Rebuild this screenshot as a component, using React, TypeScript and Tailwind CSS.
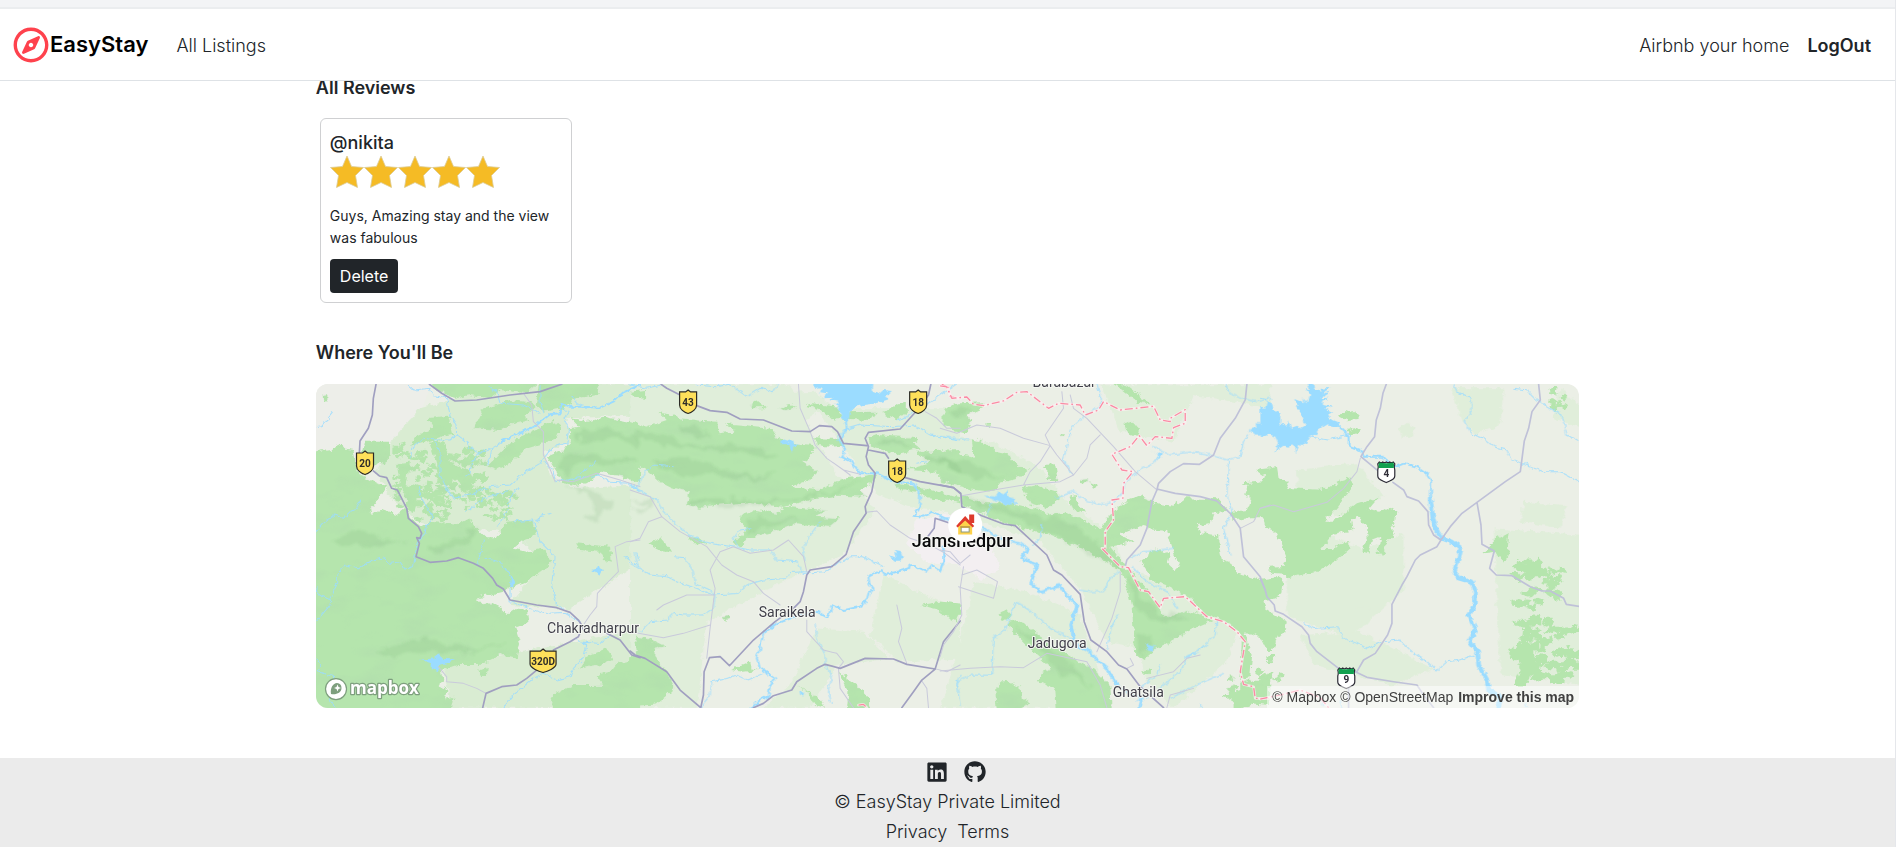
import type { ReactNode } from "react";
import { FaGithub, FaLinkedin, FaRegCompass } from "react-icons/fa";

const FOREST = "#b5e5ad";
const PALE = "#e0eeda";
const WATER = "#9bdcff";

/** Deterministic small patches of woodland scattered inside a box. */
function scatter(seed: number, x: number, y: number, w: number, h: number, count: number, size: number) {
  let s = seed * 7919;
  const rnd = () => {
    s = (s * 16807) % 2147483647;
    return s / 2147483647;
  };
  rnd();
  let d = "";
  for (let i = 0; i < count; i++) {
    const cx = x + rnd() * w;
    const cy = y + rnd() * h;
    const n = 7;
    for (let k = 0; k < n; k++) {
      const a = (k / n) * Math.PI * 2;
      const r = size * (0.35 + rnd() * 0.9);
      const px = Math.round(cx + Math.cos(a) * r * 1.3);
      const py = Math.round(cy + Math.sin(a) * r * 0.8);
      d += `${k ? "L" : "M"}${px} ${py}`;
    }
    d += "Z";
  }
  return d;
}

const tiles = [
  {
    x: -6,
    pale: [
      "M330 100L480 60 760 100 780 200 700 230 720 300 790 340 990 330 990 560 900 620 780 700 600 690 700 560 640 500 560 470 330 440 250 380 200 290 250 190Z",
      "M400 870L520 850 640 830 800 800 990 760 990 998 420 998Z",
      "M360 28L990 28 990 120 780 130 500 110Z",
    ],
    paleTone: "#d9ecd2",
    forest: [
      "M0 235L60 225 95 208 110 222 130 225 140 270 150 300 165 305 200 325 232 335 210 365 180 405 185 420 215 405 260 420 290 395 300 430 330 455 360 440 400 445 440 450 480 430 500 460 530 490 560 490 590 440 640 435 670 440 680 480 640 495 610 520 650 530 700 520 728 560 690 590 650 620 600 640 580 650 540 660 500 668 520 690 545 684 570 700 590 720 620 700 650 705 655 740 615 755 630 800 620 850 570 840 510 870 440 870 395 885 400 910 385 930 410 940 405 970 430 965 420 1020 0 1020Z",
      "M165 200L240 200 240 235 225 270 200 265 180 290 150 260 160 225Z",
      "M250 215L285 205 275 235 250 240Z",
      "M365 20L690 20 650 55 570 45 540 70 480 60 430 68 380 45Z",
      "M490 160L520 100 600 75 660 82 680 95 640 120 660 135 600 150 570 165Z",
      "M620 190L690 160 730 135 755 155 740 190 700 205 650 220 600 265 555 285 530 275 590 215Z",
      "M350 130L415 122 430 180 400 185 340 205 300 212 325 180 370 160Z",
      "M690 20L870 20 860 60 800 70 760 100 700 110 680 90Z",
      "M785 130L830 140 880 128 940 140 990 150 990 325 940 305 870 290 830 325 790 330 760 325 740 290 710 245 760 225 780 200 775 160 810 155Z",
      "M798 505L850 510 900 515 905 560 882 555 870 530 810 525Z",
      "M990 850L920 865 900 890 860 900 880 930 790 930 720 965 740 1015 990 1015Z",
      "M830 845L890 820 910 850 870 870 810 880Z",
      "M505 885L530 875 528 900 512 900Z",
      "M38 60L52 58 52 78 40 74Z",
      "M260 265L300 260 290 330 330 350 310 420 300 380 270 330Z",
      "M360 200L400 195 420 260 480 290 500 320 470 330 430 310 420 340 390 320 380 260Z",
      scatter(11, 255, 230, 260, 170, 90, 11),
      scatter(29, 300, 340, 130, 100, 36, 12),
      scatter(5, 470, 340, 150, 90, 34, 11),
      scatter(71, 390, 220, 130, 130, 24, 13),
    ],
    shade: [
      "M60 500Q130 450 210 480T300 500Q200 500 150 520Z",
      "M350 520Q430 480 500 470 470 500 380 530Z",
      "M200 830Q320 780 410 810T600 790Q520 840 400 830T260 850Z",
      "M800 170Q880 150 990 190L990 215Q900 180 820 210Z",
      "M740 260Q820 220 900 240T990 260Q900 270 840 260T770 310Z",
      "M770 335Q850 350 910 380 930 400 860 430 790 430 850 415 880 390 820 360 770 345Z",
      "M600 500Q640 460 700 480 750 470 745 410 760 440 755 490 700 500 640 490Z",
      "M400 690Q470 700 520 740 560 760 600 750 520 780 460 730Z",
      "M860 940Q910 900 990 900 930 930 900 970Z",
    ],
    water: [
      "M330 853L370 850 385 838 400 852 440 853 405 865 390 870 380 888 365 882 365 865Z",
      "M603 598L615 620 612 640 600 630Z",
      "M846 585L862 580 865 568 870 580 882 582 872 592 868 602 858 592Z",
    ],
    creeks: [
      "M18 470L40 445 75 420 100 430 120 410 140 400 152 378",
      "M18 740L60 690 62 675 40 665 25 655 18 640M60 670L80 630 80 600 105 570 145 578 190 555 225 548 240 565 270 560 285 582 310 575 322 500 345 475 350 450 370 430 350 395 335 370 325 335",
      "M18 850L30 870 25 890 70 905 75 940 60 975 75 998",
      "M295 30L312 45 360 40 370 62 410 68 420 120 438 150 440 180 420 195 375 195 340 190 305 220 302 252",
      "M375 198L390 230 390 300 410 340 430 370 480 360 540 335 600 330 640 295 690 265 705 245 730 215 770 205 775 160 762 130 775 110 745 95",
      "M445 182L475 205 478 218 510 235 545 220 580 200",
      "M510 232L485 260 480 295 468 305M545 222L540 250 528 270",
      "M625 335L600 370 590 410 560 455M520 495L510 540 500 570M470 410L520 370 600 345",
      "M615 440L670 435 690 500 735 545 725 630 740 690 760 700",
      "M525 550L570 560 590 590 605 600M600 640L600 680 700 715 760 712 810 740",
      "M705 260L730 290 735 320 800 310 870 300 900 322 960 325 990 350M790 315L830 280 855 260M720 415L690 425 680 440",
      "M800 795L830 810 820 850 790 880 780 905 740 915 700 895 670 910 610 960 580 998M808 800L870 805 900 780",
      "M540 35L560 50 570 85 640 90 690 115M690 30L690 80 700 110M785 65L800 85 830 100",
      "M18 155L35 152 68 110",
      "M980 530L985 555M945 545L965 560 985 575",
    ],
    rivers: ["M575 198L610 182 650 165 680 150 720 118 752 115 755 85 775 95 820 95 870 98 910 80 940 52 990 30"],
    minor: [
      "M385 875L410 905 410 920 460 925 500 940 528 955",
      "M640 55L665 90 670 140 700 170 700 240 715 270 735 320",
      "M740 315L790 320 860 295 930 315 990 335",
      "M990 495L950 500 915 515 925 590 885 630 862 655 860 695 840 720 820 750",
    ],
    major: [
      "M198 28L190 70 187 120 175 160 150 198 148 235",
      "M190 288L208 303 230 308 245 340 262 345 290 400 295 430 325 455 335 475 330 490 320 488 328 505 318 545 360 562 410 558 445 548 490 565 520 580 548 610 560 630 580 642 600 675 680 690 740 698 780 712 805 735 818 755 805 785 780 800 730 825",
      "M680 885L650 910 620 930 575 935 528 955 518 998",
      "M358 28L395 55 435 78 500 75 600 60 690 50 755 28",
      "M890 775L930 795 965 840 990 848",
    ],
    border: [],
  },
  {
    x: 314,
    pale: [
      "M0 28L480 28 540 160 620 300 740 400 640 540 520 590 400 650 230 740 200 998 0 998Z",
      "M760 600L840 640 990 700 990 850 800 860 720 780Z",
      "M560 760L700 770 780 850 620 870 540 998 400 998 480 930Z",
      "M560 100L990 100 990 420 860 400 740 360Z",
      "M340 60L560 50 600 90 480 160 350 130Z",
    ],
    paleTone: PALE,
    forest: [
      "M0 140L50 155 110 135 85 110 150 130 220 138 262 140 265 175 310 170 285 145 340 150 430 160 440 190 480 205 555 210 545 240 520 260 560 290 540 315 480 335 560 345 650 310 740 298 725 325 690 345 712 365 620 362 540 375 460 395 360 385 260 392 210 398 165 388 180 350 120 335 90 320 50 285 0 260Z",
      "M335 420L380 405 450 415 460 395 590 405 555 425 630 430 600 455 530 450 500 445 430 470 350 490 330 520 310 500 350 460 330 440Z",
      "M555 190L630 192 640 212 600 215 560 210Z",
      "M715 190L740 180 870 190 850 205 870 220 800 238 720 215Z",
      "M640 112L740 110 720 135 660 132 640 138Z",
      "M545 85L610 90 640 125 615 138 580 110 530 92Z",
      "M760 115L800 85 830 80 830 110 800 135Z",
      "M860 230L990 225 990 325 920 290 830 285 900 265Z",
      "M790 325L880 338 990 370 990 385 900 370 860 350 800 340Z",
      "M870 690L930 680 990 685 990 720 930 705Z",
      "M0 850L20 830 15 785 60 790 110 815 70 825 85 860 110 890 135 940 80 985 0 990Z",
      "M625 890L680 930 715 970 720 1010 650 1010 655 950Z",
      "M500 930L570 970 585 998 555 990 530 950Z",
      "M300 885L360 860 365 880 385 885 340 890Z",
      "M55 505L90 490 125 530 90 525Z",
      "M358 90L380 75 410 100 365 100Z",
      "M445 100L480 90 500 100 465 108Z",
      "M170 485L210 490 230 505 190 505Z",
      "M275 725L295 720 300 730 285 735Z",
      "M0 50L45 45 45 68 10 65Z",
      "M940 105L990 85 990 160 940 150Z",
    ],
    shade: [
      "M0 180Q70 160 140 195T300 200Q380 215 440 250 340 235 250 225T90 215Z",
      "M60 260Q160 240 260 280T450 290Q400 320 300 310T120 290Z",
      "M180 375Q260 365 360 375T560 360Q640 340 700 315 640 350 540 372T360 390 190 388Z",
      "M140 150Q220 160 240 190 180 185 150 170Z",
      "M360 430Q440 440 500 430 420 460 350 480Z",
      "M740 195Q800 190 850 210 790 215 740 205Z",
      "M880 250Q940 240 990 270L990 290Q940 260 880 260Z",
      "M0 380Q40 360 70 380 50 410 0 410 50 395 50 385 0 395Z",
      "M0 900Q50 880 110 920 60 930 20 960Z",
    ],
    water: [
      "M550 15L730 15 728 50 745 58 760 45 785 48 765 65 778 72 740 85 700 90 675 95 660 110 655 140 635 132 628 105 615 88 625 80 595 75 610 68 580 70 590 55 570 52 575 40 555 42Z",
      "M448 208L455 195 470 200 488 195 492 208 510 210 492 215 490 230 480 222 478 208Z",
      "M778 540L798 548 795 525 812 528 818 545 808 560 790 560Z",
      "M508 945L522 952 520 965 510 958Z",
    ],
    creeks: [
      "M0 30L50 40 90 30M200 30L260 35 300 28 350 65 390 40 430 50 445 28",
      "M0 330L20 340 45 290 70 270 130 275M20 340L80 375 100 410 140 450 180 480 220 500 270 510 310 515 360 525 420 525 440 555 500 560 520 595 580 590 660 545 700 545 760 575",
      "M0 565L60 600 110 605 170 630 250 660 320 655 350 630 400 615 470 610 480 592 530 590",
      "M135 545L165 548 190 590 195 625 240 645 255 665 250 700 220 720 160 720 130 715 110 735 60 740 30 770",
      "M325 515L310 490 330 465 365 460M525 560L520 520 540 480 570 440M15 530L20 560 30 580",
      "M210 998L240 960 245 920 290 910 320 900 350 915 400 895",
      "M555 745L560 790 585 840 585 870 605 900 595 950 605 985",
      "M620 195L640 165 690 150 790 155 850 150 900 180 990 195M860 265L890 260",
      "M990 20L930 60 880 95 830 125 800 135M990 900L980 930 990 950",
    ],
    rivers: [
      "M645 130L650 160 630 195 645 225 632 245 665 260 690 295 740 295 790 320 850 325 870 360 868 400 852 422 880 425 905 410 945 430 990 432",
      "M365 998L400 965 415 970 420 930 435 910 390 880 380 850 400 775 440 745 490 725 560 710 592 728 608 690 640 705 690 695 710 675 715 655 730 640 718 625 715 605 755 585 765 600 830 582 845 570 890 590 905 570 930 585 940 560 940 525",
    ],
    minor: [
      "M0 345L60 365 95 425 150 470 230 515 275 570 320 600 370 620 400 655 450 690",
      "M0 500L30 490 55 440 95 425M270 530L310 515 360 535 430 525 475 495 520 545 530 590",
      "M270 530L240 585 255 640 240 760 230 850M80 705L100 690 170 660 250 660M0 770L100 788 160 775 240 750",
      "M505 28L510 100 540 170 555 210 590 250 640 285 690 298M640 285L660 300",
      "M530 735L530 770 580 825 620 835 640 860 625 880 630 940 670 998",
      "M800 690L815 760 805 800 830 865M990 870L950 890 910 880",
      "M708 412L740 408 780 450 840 490 900 510 945 535 990 570",
      "M875 918L890 940 895 998M885 110L920 130 950 160 990 160",
    ],
    major: [
      "M93 28L110 40 150 60M200 92L240 107 290 112 330 132 400 135 485 168 540 170 568 152 605 155 622 170 640 205 710 212",
      "M902 28L895 60 870 95 850 118 810 162 715 172 705 190 715 215 708 245 715 270 735 295 725 350 705 395 708 415 670 470 648 538 605 575 540 585 530 600 520 650 510 680 490 700 435 740 370 795 298 872 270 845 238 848 222 890 220 960 212 998",
      "M715 225L765 235 775 250M825 308L870 320 970 338 990 355",
      "M0 828L15 840 45 850 110 890 150 945 212 998",
      "M370 998L400 985 430 962 485 945 500 920 560 880 585 868 630 880 705 850 790 852 830 868 915 882 875 915 850 950 815 998",
      "M885 495L912 460 915 430 960 445M915 882L940 800 990 738",
    ],
    border: ["M935 28L955 38 960 65 990 72", "M685 990L700 988 710 998"],
  },
  {
    x: 624,
    pale: [
      "M0 180L160 200 300 280 380 380 520 480 560 600 600 820 500 800 420 640 300 500 0 400Z",
      "M100 620L260 650 420 720 480 900 420 998 0 998 60 800Z",
      "M480 28L990 28 990 100 760 60 700 200 540 170Z",
      "M540 580L760 640 900 740 860 860 700 998 620 920Z",
    ],
    paleTone: PALE,
    forest: [
      "M20 95L60 85 130 82 125 100 80 120 95 140 80 175 40 165 15 140Z",
      "M0 225L40 235 100 245 95 190 140 205 165 230 210 240 215 260 265 285 240 305 180 320 160 350 100 345 0 320Z",
      "M65 358L130 385 200 385 245 395 300 402 320 420 370 410 440 440 480 460 520 430 540 480 580 500 510 515 545 560 620 640 680 730 740 705 820 735 760 760 650 820 610 855 585 835 575 700 550 600 500 560 430 520 330 480 210 450 65 390Z",
      "M245 340L290 330 350 350 360 375 320 400 270 385Z",
      "M305 270L345 268 350 300 355 315 320 315 325 290Z",
      "M385 365L410 360 412 390 440 410 400 405Z",
      "M515 20L560 32 628 85 590 80Z",
      "M550 145L575 138 597 165 592 185 555 170Z",
      "M420 312L445 310 445 322 425 322Z",
      "M450 322L472 330 462 345Z",
      "M358 178L374 178 372 185 360 185Z",
      "M500 430L515 415 545 385 600 362 640 378 640 458 610 450 560 470 520 480 500 470Z",
      "M600 560L640 530 640 618Z",
      "M0 680L50 685 65 690 55 720 50 740 0 715Z",
      "M175 715L200 705 215 720 190 738Z",
      "M205 740L230 735 270 760 320 800 400 850 460 880 510 930 515 1010 350 1010 345 940 290 920 310 890 335 880 280 830 210 760Z",
      "M165 940L195 915 240 935 245 970 270 985 215 1010 170 1010Z",
      "M605 890L630 882 628 900 608 898Z",
      "M900 920L960 920 990 905 990 990 940 985 880 1010 880 975 845 965 900 945Z",
      "M140 150L152 148 152 155 142 155Z",
      scatter(9, 860, 890, 120, 90, 14, 12),
    ],
    shade: [
      "M0 260Q70 250 120 280T200 300Q120 320 60 290Z",
      "M80 370Q200 400 300 420T480 510Q520 560 550 590 460 540 340 480T90 385Z",
      "M560 600Q600 660 640 700T760 720Q680 760 630 730T560 610Z",
      "M590 660Q630 710 680 740 620 730 590 690Z",
      "M230 750Q300 790 360 850T460 940Q380 910 330 860Z",
      "M20 105Q60 95 100 100 70 120 50 130Z",
      "M590 780Q620 770 640 800 620 830 600 840Z",
    ],
    water: [
      "M132 362L165 365 175 350 190 358 202 348 205 365 222 372 228 385 200 390 180 380 160 375Z",
      "M625 222L650 238 668 232 665 245 648 250 655 242Z",
      "M618 808L635 812 645 815 635 830 622 825Z",
      "M925 165L950 155 945 145 965 145 970 160 965 182 945 182Z",
    ],
    creeks: [
      "M470 28L485 80 470 100 430 125 390 165 382 210 370 250 395 300 M0 185L90 195",
      "M345 370L400 350 440 380 490 390 520 380 550 350 555 320 600 285 640 265 655 245",
      "M640 215L690 240 760 230 810 240 860 255 900 245 910 200 925 180",
      "M855 28L870 55 905 72 950 80 990 70M865 255L860 360 875 410 850 460 870 540",
      "M305 450L300 490 280 510M535 590L510 610 490 650 450 650 420 645M570 550L610 530 700 520",
      "M575 575L620 620 680 650 710 700M205 735L230 680 260 700 330 760 390 790 420 815",
      "M205 735L195 765 160 790 155 900 90 900 50 920 60 990",
      "M535 720L515 750 500 820M800 810L740 850 720 890 670 930 640 960 590 980M830 735L825 780 770 830 730 850M850 895L780 925 690 970M780 990L785 998M660 870L650 900 600 940",
      "M155 385L140 420",
    ],
    rivers: [
      "M0 430L60 450 130 460 180 490 240 505 262 520 245 550 290 570 272 625 300 650 360 632 375 655 410 690 392 750 405 810 440 825 500 880 530 930 560 950 605 970 598 998",
      "M10 515L10 560 0 590",
    ],
    thick: "M262 520L245 550 290 570 272 625 300 650 360 632 375 655 410 690 392 750 405 810 440 825 500 880 530 930",
    minor: [
      "M0 160L50 175 110 150 180 160 250 190 330 212 350 240 400 300 360 320 250 330 160 345 65 362M330 212L300 260 270 290 250 330",
      "M365 50L370 100 315 180 330 212M390 60L400 100 440 130 520 215 585 290 650 345",
      "M400 300L440 250 450 210 480 180",
      "M0 525L30 530 60 565 90 540M65 600L110 585 172 620 160 670 55 635M70 575L60 640 65 720 40 770 10 810 0 845",
      "M540 590L540 650 515 730 470 830M0 888L90 880 180 875 250 878 320 835 440 860 480 930 500 998",
      "M570 850L580 870 560 880M620 910L700 890 740 850 780 840M680 998L690 960 760 940",
      "M990 390L960 400 940 440 900 460",
    ],
    mid: [
      "M920 28L915 75 885 130 840 190 820 240 778 268 730 266 690 290 655 325 650 345 635 380 620 460 600 510 560 555 555 575",
      "M650 342L705 355 780 365 830 378 870 415 900 460 910 545 960 605 975 645",
    ],
    major: ["M0 330L40 338 62 355 65 395 125 422 190 447 225 452 320 540 340 585 365 600 420 658 432 740 452 795 500 830 535 870 560 882 600 935 670 998"],
    border: [
      "M0 33L20 36 35 70 80 66 100 88 130 92 190 78 230 52 260 50 325 100 355 85 420 90 435 120 475 105 490 80 540 105 640 94 660 135 690 140 690 130 735 104 735 145 700 158 695 190 645 185 620 212 597 182 570 215 515 238 545 285 578 290 550 325 548 370 515 375 520 435 495 470 495 520 485 520 540 575 565 578 600 645 625 650 660 698 670 670 735 665 800 725 850 740 890 770 915 800 900 890 910 928 940 935 945 970 990 970",
    ],
  },
  {
    x: 834,
    y: 66,
    pale: ["M410 200L640 300 760 250 760 420 600 560 410 500Z", "M440 60L620 40 700 140 560 200 440 130Z"],
    paleTone: PALE,
    forest: [
      "M0 155L30 165 70 170 105 145 200 148 235 185 190 190 180 220 140 225 150 250 200 255 215 330 245 340 265 370 330 390 390 380 400 400 395 430 375 445 340 450 345 475 370 490 410 515 405 545 380 560 370 600 350 600 330 560 300 550 285 550 305 620 300 680 270 690 275 560 240 520 170 495 120 445 60 410 0 390L0 305 30 295 55 315 50 340 75 365 90 350 75 320 50 240 0 235Z",
      "M315 60L380 52 385 85 410 95 420 115 530 120 590 80 608 95 600 120 570 160 540 195 525 215 545 215 620 160 685 140 650 180 690 185 715 170 738 185 735 210 720 235 735 250 705 280 705 310 690 318 682 305 690 260 665 270 655 310 640 305 640 285 652 265 650 230 625 200 605 205 610 240 545 255 510 300 545 300 560 285 600 275 600 295 560 330 510 360 420 383 395 370 360 368 355 350 400 348 410 320 395 285 375 245 345 235 340 205 300 205 250 210 245 185 290 180 300 150 285 130 295 105 275 100 330 95 345 80Z",
      scatter(41, 320, 620, 70, 70, 10, 12),
    ],
    shade: [],
    water: [],
    creeks: [],
    rivers: [],
    minor: [],
    major: [],
    border: [],
  },
  {
    x: 944,
    pale: [
      "M570 40L730 40 720 150 640 180 600 120ZM900 40L970 100 970 160 880 130Z",
      "M790 380L920 390 900 460 780 440ZM700 460L970 480 970 930 720 900Z",
      "M120 780L300 770 520 880 400 930 160 870Z",
      "M415 160L440 140 465 160 450 185 425 185ZM285 700L330 690 325 740 295 735Z",
    ],
    paleTone: PALE,
    forest: [
      "M233 122L260 105 295 120 290 132 260 136Z",
      "M257 165L290 158 303 172 275 180Z",
      "M665 535L690 510 710 490 745 472 740 515 752 525 732 562 715 548 705 530Z",
      scatter(17, 770, 550, 80, 60, 17, 17),
      scatter(33, 860, 580, 50, 90, 14, 13),
      scatter(45, 760, 640, 80, 60, 8, 15),
      scatter(52, 765, 730, 90, 180, 36, 18),
      scatter(64, 860, 730, 85, 60, 10, 16),
      scatter(78, 870, 820, 90, 100, 26, 16),
      scatter(81, 870, 40, 60, 60, 12, 11),
      "M790 740L820 760 800 800 825 850 800 930 760 930 780 880 785 850 785 800Z",
    ],
    shade: [],
    water: [
      "M0 95L15 98 20 78 35 85 40 105 60 115 60 145 78 152 85 135 92 158 112 152 118 160 135 150 125 120 105 90 115 92 105 72 130 82 125 70 140 85 150 60 135 40 148 42 140 15 160 15 165 45 185 50 178 42 212 38 190 55 210 50 180 70 205 68 185 78 192 90 215 95 195 100 215 110 205 125 215 135 240 145 230 155 200 148 180 160 165 180 150 185 140 205 118 210 108 238 105 215 95 208 85 215 70 212 42 230 55 208 45 185 20 178 0 185Z",
    ],
    creeks: [
      "M150 185L200 195 260 182M0 70L20 75",
      "M580 28L590 50 632 68 635 105 612 140 635 178 670 190 700 215 740 225 750 250 790 268 850 290 900 290 957 320",
      "M760 40L800 45 825 70 860 95 905 120 920 180 957 200M785 268L800 262 805 278",
      "M128 745L160 760 230 755 250 790 290 805 320 822 365 800 420 795 455 830 500 860 530 888 560 860 600 855 640 840",
      "M795 985L800 998M240 980L245 998M180 975L190 990",
    ],
    rivers: ["M232 150L265 182 265 212 300 225 310 245 370 245 380 260 410 275 435 265 470 275 500 295 512 320 512 400 520 440 545 490"],
    thick: "M510 370L518 430 530 470 545 490 575 500 602 520 595 550 582 590 595 608 635 620 645 650 645 685 625 720 645 762 628 800 652 830 655 870 680 915 685 945 720 965 715 998",
    minor: ["M0 400L40 390 100 410 200 382 250 340 290 290 300 250"],
    mid: [
      "M378 28L368 55 360 100 348 135 343 185 320 215 302 245 350 285 M398 322L430 345 440 365 475 378 503 410 505 450 520 480 542 495",
      "M835 28L840 75 815 110 805 160 792 198 780 290 735 320 650 382 605 415 570 455 542 495 530 515 480 540 465 555 440 605 425 630 395 688 395 745 382 780 345 835 310 855 290 890",
      "M650 382L655 410 662 450 665 508 702 528 688 580 708 600 755 602 810 635 845 648 870 648 910 670 918 688 957 694",
      "M0 610L15 645 20 665 42 690 45 708 70 718 125 755 145 780 150 805 170 830 235 880",
      "M285 890L320 907 400 920 470 930 490 960 520 998M265 930L265 998",
    ],
    major: [],
    border: ["M0 972L60 960 120 945 180 968 205 998"],
  },
];

function Tile({ x, y = -9, children }: { x: number; y?: number; children: ReactNode }) {
  return <g transform={`translate(${x} ${y}) scale(0.33333)`}>{children}</g>;
}

function YellowShield({ x, y, label, wide }: { x: number; y: number; label: string; wide?: boolean }) {
  const w = wide ? 13 : 8.5;
  return (
    <g transform={`translate(${x} ${y})`}>
      <path
        d={`M0 -12L2.5 -10H${w}V3C${w} 7 4 10.5 0 11.5C-4 10.5 ${-w} 7 ${-w} 3V-10H-2.5Z`}
        fill="#fee05a"
        stroke="#2b2a25"
        strokeWidth="1.2"
      />
      <text y="4" textAnchor="middle" fontSize="10" fontWeight="700" fill="#2f2d28">
        {label}
      </text>
    </g>
  );
}

function GreenShield({ x, y, label }: { x: number; y: number; label: string }) {
  return (
    <g transform={`translate(${x} ${y})`}>
      <path
        d="M-7 -10Q-5 -8.500 -3.500 -10Q-2 -8.500 0 -10Q2 -8.500 3.500 -10Q5 -8.500 7 -10L8.500 -8Q7.500 -5 8.500 -2V4C8.500 8 4 8.500 0 10.500C-4 8.500 -8.500 8 -8.500 4V-2Q-7.500 -5 -8.500 -8Z"
        fill="#fff"
        stroke="#2b2a35"
        strokeWidth="1.200"
      />
      <path d="M-7 -9.500Q0 -8 7 -9.500L7.800 -7.500 7.500 -4H-7.500L-7.800 -7.500Z" fill="#12a150" />
      <text y="5" textAnchor="middle" fontSize="10" fontWeight="700" fill="#2f2d38">
        {label}
      </text>
    </g>
  );
}

const places = [
  { name: "Chakradharpur", x: 277, y: 249 },
  { name: "Saraikela", x: 471, y: 233 },
  { name: "Jadugora", x: 741, y: 264 },
  { name: "Ghatsila", x: 822, y: 313 },
  { name: "Barabazar", x: 748, y: 3 },
];

function MapCanvas() {
  return (
    <svg
      viewBox="0 0 1263 324"
      preserveAspectRatio="xMidYMid slice"
      className="block h-full w-full font-['Roboto',sans-serif]"
      role="img"
      aria-label="Map of Jamshedpur"
    >
      <defs>
        <filter id="rough" x="-20" y="-20" width="1303" height="364" filterUnits="userSpaceOnUse">
          <feTurbulence type="fractalNoise" baseFrequency="0.16" numOctaves="3" seed="4" result="n" />
          <feDisplacementMap in="SourceGraphic" in2="n" scale="7" xChannelSelector="R" yChannelSelector="G" />
        </filter>
        <filter id="ripple" x="-20" y="-20" width="1303" height="364" filterUnits="userSpaceOnUse">
          <feTurbulence type="fractalNoise" baseFrequency="0.2" numOctaves="2" seed="8" result="n" />
          <feDisplacementMap in="SourceGraphic" in2="n" scale="5" xChannelSelector="R" yChannelSelector="G" />
        </filter>
        <filter id="relief" x="-20" y="-20" width="1303" height="364" filterUnits="userSpaceOnUse">
          <feTurbulence type="fractalNoise" baseFrequency="0.025 0.055" numOctaves="3" seed="12" result="n" />
          <feColorMatrix
            in="n"
            type="matrix"
            values="0 0 0 0 0.42  0 0 0 0 0.66  0 0 0 0 0.42  3 0 0 0 -1.5"
            result="blotch"
          />
          <feComposite in="blotch" in2="SourceAlpha" operator="in" />
        </filter>
        <filter id="soft" x="-20" y="-20" width="1303" height="364" filterUnits="userSpaceOnUse">
          <feTurbulence type="fractalNoise" baseFrequency="0.06" numOctaves="3" seed="3" result="n" />
          <feDisplacementMap in="SourceGraphic" in2="n" scale="16" xChannelSelector="R" yChannelSelector="G" />
          <feGaussianBlur stdDeviation="0.8" />
        </filter>
      </defs>
      <rect width="1263" height="324" fill="#ebefe6" />
      <path d="M0 0H115L90 70 0 75Z" fill="#edeee9" />
      <g filter="url(#rough)">
        {tiles.map((t) => (
          <Tile key={t.x} x={t.x} y={t.y}>
            <path d={t.pale.join("")} fill={t.paleTone} />
          </Tile>
        ))}
        <path d="M600 135L640 128 668 150 685 185 665 195 640 180 610 178 590 160Z" fill="#f3eff1" />
      </g>
      <g filter="url(#rough)">
        {tiles.map((t) => (
          <Tile key={t.x} x={t.x} y={t.y}>
            <path d={t.forest.join("")} fill={FOREST} />
          </Tile>
        ))}
      </g>
      <g filter="url(#relief)" opacity="0.28">
        {tiles.slice(0, 3).map((t) => (
          <Tile key={t.x} x={t.x} y={t.y}>
            <path d={t.forest.join("")} />
          </Tile>
        ))}
      </g>
      <g filter="url(#soft)">
        {tiles.map((t) => (
          <Tile key={t.x} x={t.x} y={t.y}>
            <path d={t.shade.join("")} fill="#5c9a5f" opacity="0.13" />
          </Tile>
        ))}
      </g>
      <g filter="url(#ripple)" strokeLinejoin="round" strokeLinecap="round">
        {tiles.map((t) => (
          <Tile key={t.x} x={t.x} y={t.y}>
            <path d={t.water.join("")} fill={WATER} />
            <path d={t.creeks.join("")} fill="none" stroke={WATER} strokeWidth="3" opacity="0.85" />
            <path d={t.rivers.join("")} fill="none" stroke={WATER} strokeWidth="6" />
            <path d={t.thick ?? ""} fill="none" stroke={WATER} strokeWidth={t.x > 900 ? 14 : 9} />
          </Tile>
        ))}
      </g>
      <g fill="none" strokeLinejoin="round" strokeLinecap="round">
        {tiles.map((t) => (
          <Tile key={t.x} x={t.x} y={t.y}>
            <path d={t.minor.join("")} stroke="#c9cadb" strokeWidth="3" />
            <path d={(t.mid ?? []).join("")} stroke="#bfc1d8" strokeWidth="5" />
            <path d={t.major.join("")} stroke="#a09fc0" strokeWidth="5" />
            <path d={t.border.join("")} stroke="#fbeff0" strokeWidth="8" opacity="0.8" />
            <path d={t.border.join("")} stroke="#fa8ca4" strokeWidth="4" strokeDasharray="24 9 5 9" strokeLinecap="butt" />
          </Tile>
        ))}
      </g>
      <YellowShield x={49} y={79} label="20" />
      <YellowShield x={372} y={18} label="43" />
      <YellowShield x={602} y={18} label="18" />
      <YellowShield x={581} y={87} label="18" />
      <YellowShield x={227} y={277} label="320D" wide />
      <GreenShield x={1070} y={88} label="4" />
      <GreenShield x={1030} y={294} label="9" />
      <g textAnchor="middle" fill="#41404a" stroke="#f5f7f2" strokeWidth="2" paintOrder="stroke" strokeLinejoin="round">
        {places.map((p) => (
          <text key={p.name} x={p.x} y={p.y} fontSize="14">
            {p.name}
          </text>
        ))}
        <text x="646" y="163" fontSize="18" fontWeight="500" fill="#08080a">
          Jamshedpur
        </text>
      </g>
      <g transform="translate(649 141)">
        <circle r="17" fill="#fff" />
        <path d="M4 -8V-10.500H9V-2H4Z" fill="#dc3a2c" />
        <path d="M-7 -1L0 -7 7 -1V9.500H-7Z" fill="#fdd24c" />
        <path d="M-9 1L0 -9 9 1 7.500 2.500 0 -4.500 -7.500 2.500Z" fill="#df3a2e" />
        <rect x="-4" y="2" width="8" height="5" fill="#fff" stroke="#8c9a83" strokeWidth="1" />
        <path d="M-5 2H5" stroke="#c79a34" strokeWidth="1.500" />
      </g>
      <g transform="translate(20 305)">
        <circle r="10.500" fill="#fff" stroke="#7e9f7e" strokeWidth="1.200" />
        <path d="M-5 5C-6 -1 -3 -6 1 -6A5 5 0 0 1 5.500 -1C5.500 4 0 6 -5 5Z" fill="#7e9f7e" />
        <path d="M1.500 -4.500L2.500 -2 5 -1 2.500 0 1.500 2.500 0.500 0 -2 -1 0.500 -2Z" fill="#fff" />
        <text
          x="14"
          y="5"
          fontSize="17"
          fontWeight="700"
          fill="#fff"
          stroke="#7e9f7e"
          strokeWidth="2.500"
          paintOrder="stroke"
          strokeLinejoin="round"
          className="font-['Open_Sans',sans-serif]"
        >
          mapbox
        </text>
      </g>
    </svg>
  );
}

function Star() {
  return (
    <svg viewBox="0 0 34 34" className="size-[34px] shrink-0" aria-hidden="true">
      <path
        d="M17 1L21.500 11.500 33.500 12.500 25.500 20.500 27.500 32.500 17 27.500 6.500 32.500 8.500 20.500 0.500 12.500 12.500 11.500Z"
        fill="#f5bb25"
        stroke="#dccb96"
        strokeWidth="0.800"
      />
    </svg>
  );
}

export default function App() {
  return (
    <div className="flex min-h-screen flex-col border-r border-gray-200 bg-white font-['Inter',sans-serif] text-[#212529]">
      <div className="h-[9px] shrink-0 border-b-2 border-[#ebedef] bg-[#f3f4f6]" />
      <header className="relative z-10 flex h-[72px] shrink-0 items-center border-b border-[#dee2e6] bg-white pr-6 pl-[13px] text-[18px] font-light">
        <a href="#home" className="flex items-center gap-px text-[22px] font-semibold text-black">
          <FaRegCompass className="size-9 text-[#fe424d]" />
          EasyStay
        </a>
        <nav className="ml-7 flex flex-1 items-center pt-0.5">
          <a href="#listings">All Listings</a>
          <a href="#host" className="ml-auto">
            Airbnb your home
          </a>
          <a href="#logout" className="ml-[18px] font-semibold">
            LogOut
          </a>
        </nav>
      </header>

      <main className="mx-auto w-2/3 flex-1 pb-10">
        <section className="-mt-1">
          <h2 className="text-[18px] leading-[22px] font-semibold">All Reviews</h2>
          <article className="mt-[19px] ml-1 w-[252px] rounded-md border border-[#cfd0d2] px-[9px] pt-3 pb-[9px]">
            <h3 className="text-[18px] leading-6 font-medium">@nikita</h3>
            <div className="flex" role="img" aria-label="5 out of 5 stars">
              <Star />
              <Star />
              <Star />
              <Star />
              <Star />
            </div>
            <p className="mt-4 text-[14px] leading-[22px]">Guys, Amazing stay and the view was fabulous</p>
            <button type="button" className="mt-[10px] block h-[34px] rounded bg-[#212529] px-[10px] text-[16px] text-white">
              Delete
            </button>
          </article>
        </section>

        <section className="mt-[39px]">
          <h2 className="text-[18px] leading-[22px] font-semibold">Where You'll Be</h2>
          <div className="relative mt-5 h-[324px] overflow-hidden rounded-xl">
            <MapCanvas />
            <div className="absolute right-0 bottom-0 flex h-[22px] items-center gap-[5px] bg-white/50 px-[5px] font-['Liberation_Sans',sans-serif] text-[14px] text-[#404040]">
              <span>
                <a href="#mapbox">© Mapbox</a> <a href="#osm">© OpenStreetMap</a>
              </span>
              <a href="#improve" className="font-bold">
                Improve this map
              </a>
            </div>
          </div>
        </section>
      </main>

      <footer className="flex flex-col items-center bg-[#ebebeb] text-[18px] leading-[30px] font-light">
        <div className="flex h-[29px] items-start gap-4 pt-[3px] pl-4">
          <a href="#linkedin" aria-label="LinkedIn">
            <FaLinkedin className="size-[22px]" />
          </a>
          <a href="#github" aria-label="GitHub">
            <FaGithub className="size-[22px]" />
          </a>
        </div>
        <p>© EasyStay Private Limited</p>
        <div className="flex gap-[10px]">
          <a href="#privacy">Privacy</a>
          <a href="#terms">Terms</a>
        </div>
      </footer>
    </div>
  );
}
